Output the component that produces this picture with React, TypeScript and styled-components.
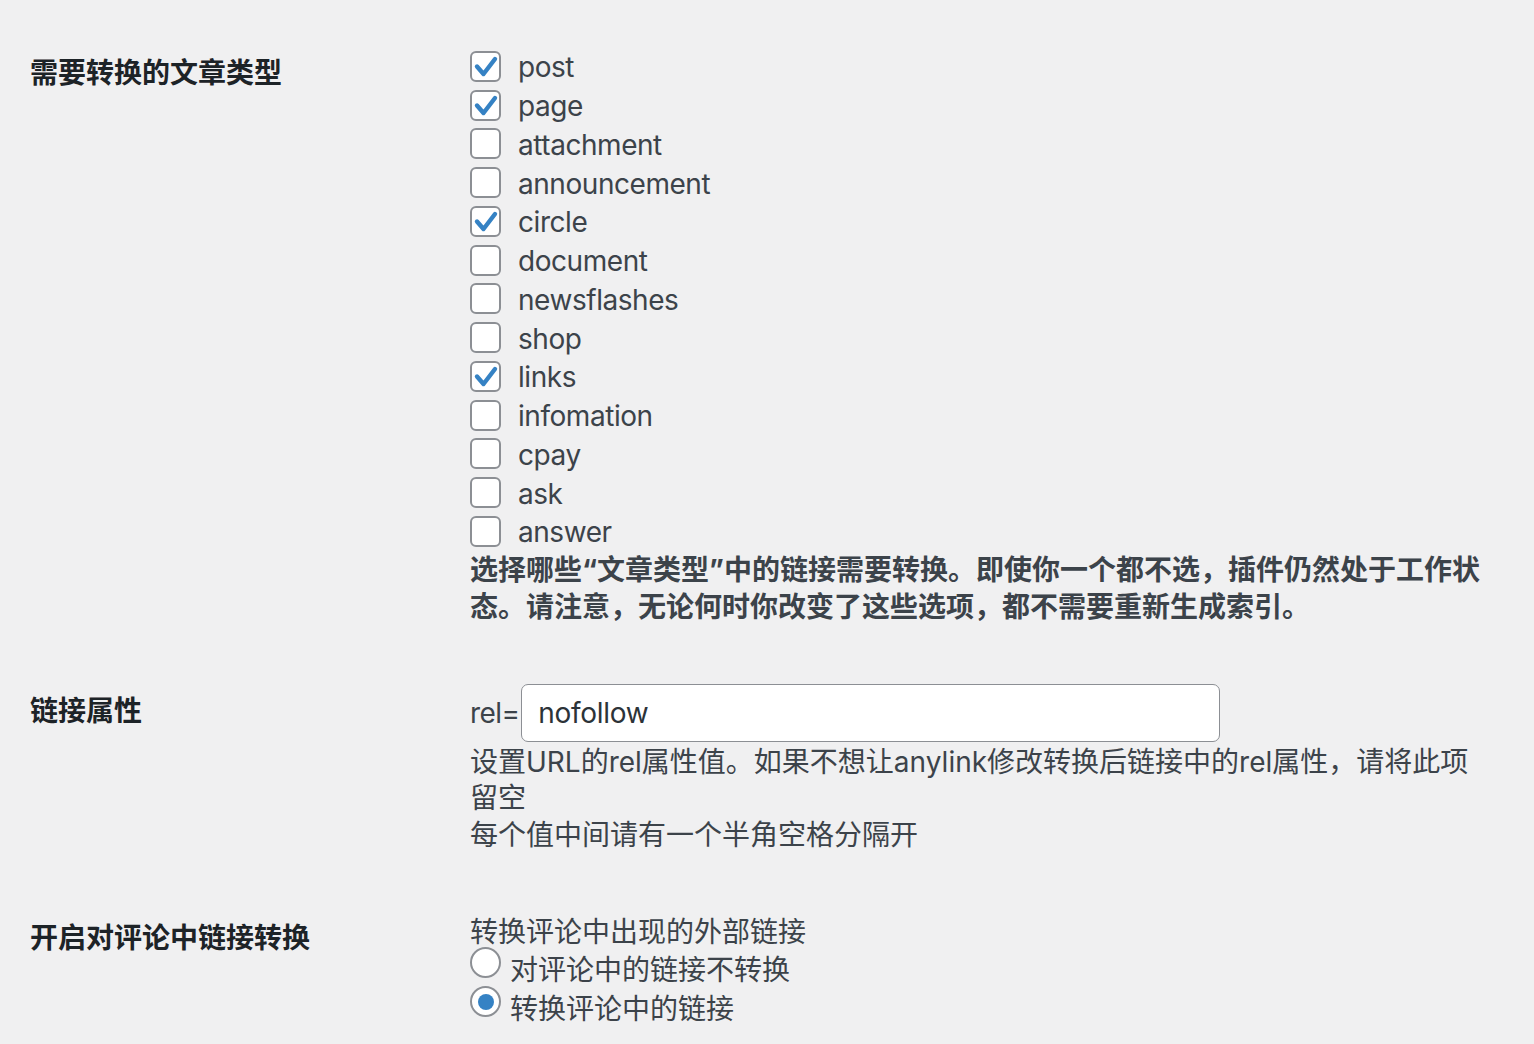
import React from "react";
import styled, { createGlobalStyle } from "styled-components";

const Global = createGlobalStyle`
  html, body { margin: 0; padding: 0; background: #f0f0f1; }
  body { font-family: "Inter", "Noto Sans CJK SC", sans-serif; color: #3c434a; }
`;

const Page = styled.div`
  padding: 18px 44px 0 30px;
  min-height: 1044px;
  box-sizing: border-box;
  display: grid;
  grid-template-columns: 440px 1fr;
  align-items: start;
`;

const Th = styled.div`
  padding-top: 38px;
  font-size: 28px;
  line-height: 35px;
  font-weight: 700;
  color: #1d2327;
`;

const Td = styled.div`
  padding: 30px 0;
  font-size: 28px;
  color: #3c434a;
`;

const OptionRow = styled.label<{ $gap: number; $h: number; $shift?: number; $ls?: number }>`
  display: flex;
  align-items: center;
  gap: ${(p) => p.$gap}px;
  height: ${(p) => p.$h}px;
  margin-top: ${(p) => p.$shift ?? 0}px;
  letter-spacing: ${(p) => p.$ls ?? 0}px;
  white-space: nowrap;
`;

const Box = styled.span`
  flex: none;
  width: 31px;
  height: 31px;
  box-sizing: border-box;
  border: 2px solid #8c8f94;
  border-radius: 6px;
  background: #fff;
  display: flex;
  align-items: center;
  justify-content: center;
  margin-top: -2px;
`;

const Radio = styled.span<{ $on: boolean }>`
  flex: none;
  width: 31px;
  height: 31px;
  box-sizing: border-box;
  border: 2px solid #8c8f94;
  border-radius: 50%;
  background: #fff;
  display: flex;
  align-items: center;
  justify-content: center;
  margin-top: -10px;
  &::after {
    content: "";
    display: ${(p) => (p.$on ? "block" : "none")};
    width: 16px;
    height: 16px;
    border-radius: 50%;
    background: #3582c4;
  }
`;

const Desc = styled.p<{ $bold?: boolean; $lh: number }>`
  margin: 0;
  font-weight: ${(p) => (p.$bold ? 700 : 400)};
  line-height: ${(p) => p.$lh}px;
  color: #3c434a;
`;

const InputRow = styled.div`
  display: flex;
  align-items: center;
  height: 58px;
  margin: -2px 0 2px;
`;

const Prefix = styled.span`
  margin-right: 2px;
  letter-spacing: -0.6px;
`;

const TextInput = styled.input`
  width: 699px;
  height: 58px;
  box-sizing: border-box;
  border: 1px solid #8c8f94;
  border-radius: 7px;
  background: #fff;
  padding: 0 16px;
  font-family: "Inter", "Noto Sans CJK SC", sans-serif;
  font-size: 28px;
  letter-spacing: -0.3px;
  color: #2c3338;
  outline: none;
`;

const Line = styled.div`
  line-height: 39px;
`;

const Check = () => (
  <svg width="27" height="27" viewBox="0 0 27 27">
    <polyline
      points="5,13.5 11.5,21 23,6"
      fill="none"
      stroke="#3582c4"
      strokeWidth="4.4"
      strokeLinecap="round"
      strokeLinejoin="round"
    />
  </svg>
);

const types: [string, boolean][] = [
  ["post", true],
  ["page", true],
  ["attachment", false],
  ["announcement", false],
  ["circle", true],
  ["document", false],
  ["newsflashes", false],
  ["shop", false],
  ["links", true],
  ["infomation", false],
  ["cpay", false],
  ["ask", false],
  ["answer", false],
];

export default function App() {
  return (
    <>
      <Global />
      <Page>
        <Th>需要转换的文章类型</Th>
        <Td>
          {types.map(([name, on]) => (
            <OptionRow key={name} $gap={17} $h={38.75} $ls={-0.45}>
              <Box>{on && <Check />}</Box>
              {name}
            </OptionRow>
          ))}
          <Desc $bold $lh={37}>
            选择哪些“文章类型”中的链接需要转换。即使你一个都不选，插件仍然处于工作状态。请注意，无论何时你改变了这些选项，都不需要重新生成索引。
          </Desc>
        </Td>

        <Th>链接属性</Th>
        <Td>
          <InputRow>
            <Prefix>rel=</Prefix>
            <TextInput defaultValue="nofollow" />
          </InputRow>
          <Desc $lh={36.5}>
            设置URL的rel属性值。如果不想让anylink修改转换后链接中的rel属性，请将此项留空
            <br />
            每个值中间请有一个半角空格分隔开
          </Desc>
        </Td>

        <Th>开启对评论中链接转换</Th>
        <Td>
          <Line>转换评论中出现的外部链接</Line>
          <OptionRow $gap={9} $h={39} $shift={-4}>
            <Radio $on={false} />
            对评论中的链接不转换
          </OptionRow>
          <OptionRow $gap={9} $h={39}>
            <Radio $on />
            转换评论中的链接
          </OptionRow>
        </Td>
      </Page>
    </>
  );
}
